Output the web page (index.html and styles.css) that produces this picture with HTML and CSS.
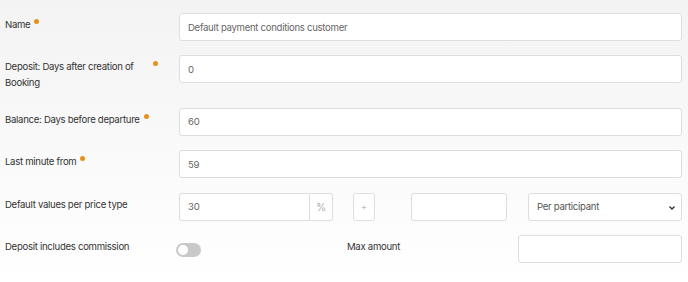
FILE: index.html
```html
<!DOCTYPE html>
<html lang="en">
<head>
    <meta charset="UTF-8">
    <meta name="viewport" content="width=device-width, initial-scale=1.0">
    <title>Payment conditions</title>
    <link rel="stylesheet" href="styles.css">
</head>
<body>

<form class="form">
    <div class="row">
        <label class="label"><span class="text">Name</span><span class="dot"></span></label>
        <div class="field"><input class="input" type="text" value="Default payment conditions customer"></div>
    </div>
    <div class="row">
        <label class="label"><span class="text">Deposit: Days after creation of Booking</span><span class="dot"></span></label>
        <div class="field"><input class="input" type="text" value="0"></div>
    </div>
    <div class="row">
        <label class="label"><span class="text">Balance: Days before departure</span><span class="dot"></span></label>
        <div class="field"><input class="input" type="text" value="60"></div>
    </div>
    <div class="row">
        <label class="label"><span class="text">Last minute from</span><span class="dot"></span></label>
        <div class="field"><input class="input" type="text" value="59"></div>
    </div>
    <div class="row">
        <label class="label"><span class="text">Default values per price type</span></label>
        <div class="field price">
            <div class="group">
                <input class="input" type="text" value="30">
                <span class="addon">%</span>
            </div>
            <button class="plus" type="button">+</button>
            <input class="input amount" type="text">
            <div class="select-wrap">
                <select class="input select">
                    <option>Per participant</option>
                </select>
                <svg class="chevron" width="8" height="6" viewBox="0 0 8 6"><path d="M1.5 1.5 L4 4 L6.5 1.5" fill="none" stroke="#333" stroke-width="1.4"/></svg>
            </div>
        </div>
    </div>
    <div class="row">
        <label class="label"><span class="text">Deposit includes commission</span></label>
        <div class="field commission">
            <span class="toggle"><span class="knob"></span></span>
            <span class="max-label">Max amount</span>
            <input class="input max" type="text">
        </div>
    </div>
</form>

</body>
</html>
```

FILE: styles.css
```css
html, body {
    height: 100%;
}
body {
    margin: 0;
    font-family: 'Inter', 'Liberation Sans', sans-serif;
    font-size: 9.6px;
    letter-spacing: -0.3px;
    color: #333;
    background: linear-gradient(to bottom, #f3f3f3, #ffffff);
}
.form {
    padding: 13px 6px 0 5px;
}
.row {
    display: flex;
    align-items: flex-start;
    margin-bottom: 14.4px;
}
.label {
    width: 174px;
    flex: none;
    display: flex;
    align-items: flex-start;
    padding: 4px 0 2px;
    line-height: 16px;
}
.label .text {
    max-width: 144px;
}
.dot {
    width: 5px;
    height: 5px;
    border-radius: 50%;
    background: #e8901a;
    margin: 2px 0 0 4px;
    flex: none;
}
.field {
    flex: 1;
    display: flex;
    align-items: center;
}
.input {
    box-sizing: border-box;
    width: 100%;
    height: 28px;
    border: 1px solid #dedede;
    border-radius: 3px;
    background: #fff;
    padding: 0 8px;
    font-family: inherit;
    font-size: 9.6px;
    letter-spacing: -0.3px;
    color: #666;
    outline: none;
}
.price .group {
    display: flex;
    width: 154px;
    flex: none;
}
.price .group .input {
    border-radius: 3px 0 0 3px;
    border-right: none;
}
.addon {
    box-sizing: border-box;
    width: 24px;
    flex: none;
    height: 28px;
    border: 1px solid #dedede;
    border-radius: 0 3px 3px 0;
    background: #fff;
    color: #aaa;
    display: flex;
    align-items: center;
    justify-content: center;
    font-size: 10px;
}
.plus {
    box-sizing: border-box;
    width: 22px;
    height: 28px;
    margin-left: 20px;
    border: 1px solid #dedede;
    border-radius: 3px;
    background: #fff;
    color: #bbb;
    font-size: 9px;
    padding: 0;
    font-family: inherit;
}
.price .amount {
    width: 96px;
    flex: none;
    margin-left: 36px;
}
.select-wrap {
    position: relative;
    width: 154px;
    flex: none;
    margin-left: 21px;
}
.select {
    appearance: none;
    -webkit-appearance: none;
    color: #555;
}
.chevron {
    position: absolute;
    right: 6px;
    top: 12px;
    pointer-events: none;
}
.commission {
    align-items: flex-start;
}
.toggle {
    display: block;
    box-sizing: border-box;
    width: 25px;
    height: 14px;
    border-radius: 7px;
    background: #c9c9c9;
    margin: 8px 0 0 -3px;
    position: relative;
    flex: none;
}
.knob {
    position: absolute;
    left: 2px;
    top: 2px;
    width: 10px;
    height: 10px;
    border-radius: 50%;
    background: #fff;
}
.max-label {
    margin-left: 146px;
    padding-top: 4px;
    line-height: 16px;
    color: #333;
}
.input.max {
    width: 164px;
    flex: none;
    margin-left: auto;
}
```
